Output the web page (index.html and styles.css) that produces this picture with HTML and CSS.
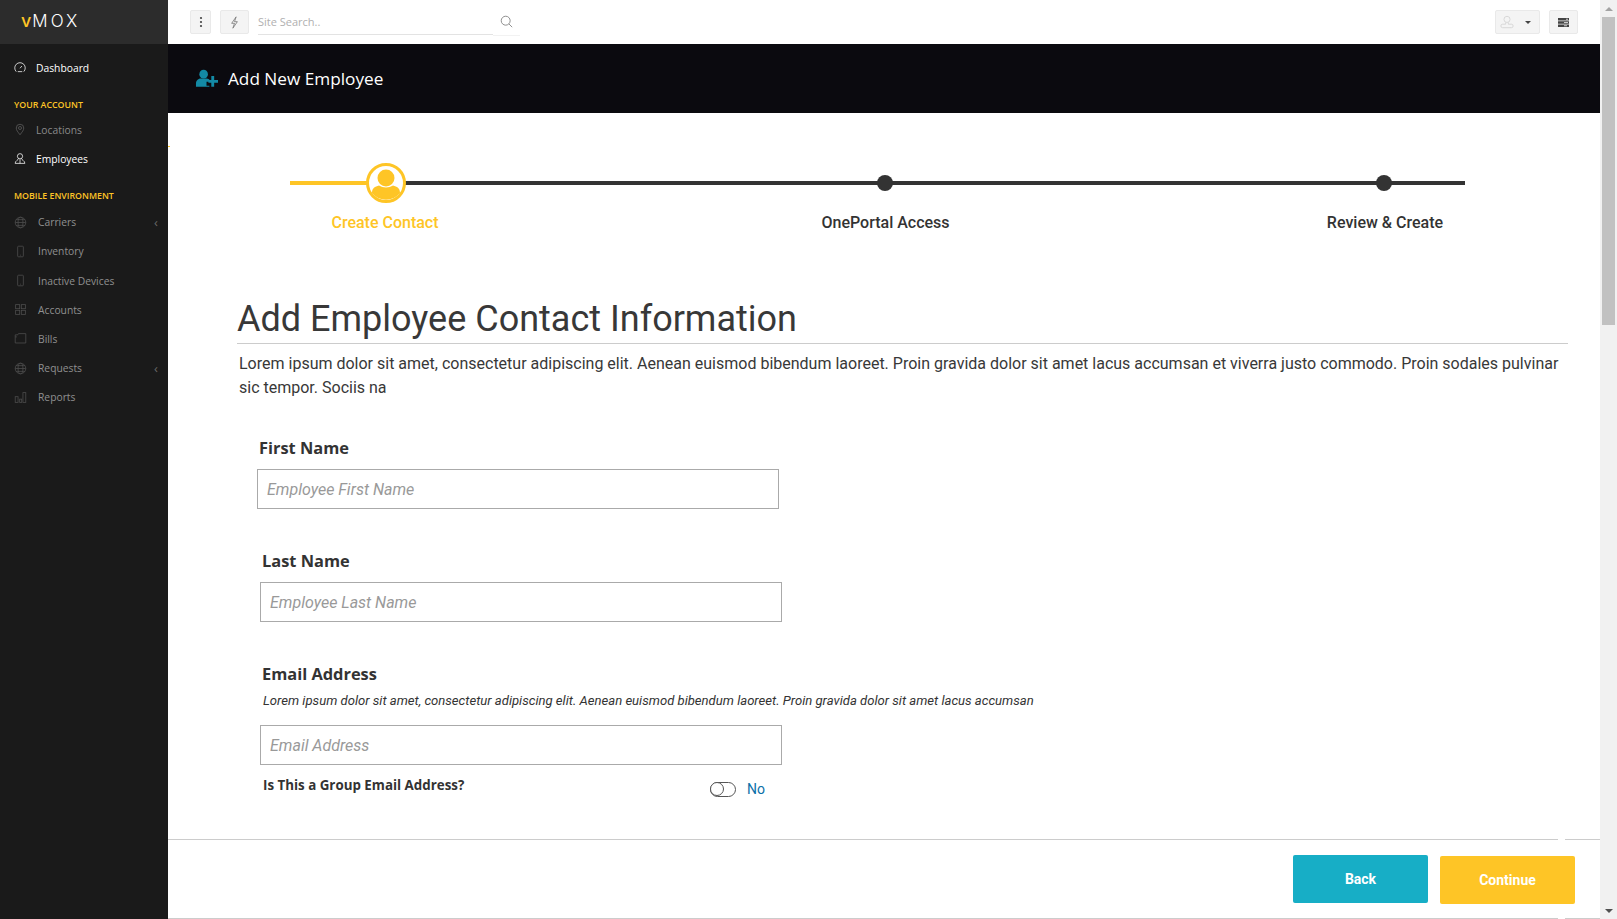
FILE: index.html
```html
<!DOCTYPE html>
<html>

<head>
  <meta charset="utf-8">
  <title>Add New Employee</title>
  <link rel="stylesheet" href="styles.css">
</head>

<body>
  <div class="app">
    <div class="sidebar">
      <div class="logo"><span class="logo-v">v</span>MOX</div>
      <ul class="menu">
        <li class="item item-on first">
          <svg class="ico" viewBox="0 0 16 16"><path d="M3 13.500a7 7 0 1 1 10 0"/><path d="M8 9l2.500-3"/><path d="M5 13.500h6"/></svg>
          Dashboard
        </li>
        <li class="group">YOUR ACCOUNT</li>
        <li class="item">
          <svg class="ico" viewBox="0 0 16 16"><path d="M8 15C5 11 3 9 3 6a5 5 0 0 1 10 0c0 3-2 5-5 9z"/><circle cx="8" cy="6" r="2"/></svg>
          Locations
        </li>
        <li class="item item-on">
          <svg class="ico" viewBox="0 0 16 16"><circle cx="8" cy="5" r="3.500"/><path d="M6 8c0 2-4.500 3-4.500 6.500h13C14.500 11 10 10 10 8"/><path d="M8 9v5.500"/></svg>
          Employees
        </li>
        <li class="group group-2">MOBILE ENVIRONMENT</li>
        <li class="item item-sub">
          <svg class="ico" viewBox="0 0 16 16"><circle cx="8" cy="8" r="6.500"/><ellipse cx="8" cy="8" rx="3" ry="6.500"/><path d="M1.500 8h13M2.500 4.500h11M2.500 11.500h11"/></svg>
          Carriers<span class="caret">&lsaquo;</span>
        </li>
        <li class="item item-sub">
          <svg class="ico" viewBox="0 0 16 16"><rect x="4.500" y="1.500" width="7" height="13" rx="1"/><path d="M7.500 12.500h1"/></svg>
          Inventory
        </li>
        <li class="item item-sub">
          <svg class="ico" viewBox="0 0 16 16"><rect x="4.500" y="1.500" width="7" height="13" rx="1"/><path d="M7.500 12.500h1"/></svg>
          Inactive Devices
        </li>
        <li class="item item-sub">
          <svg class="ico" viewBox="0 0 16 16"><rect x="2" y="2" width="5" height="5"/><rect x="9" y="2" width="5" height="5"/><rect x="2" y="9" width="5" height="5"/><rect x="9" y="9" width="5" height="5"/></svg>
          Accounts
        </li>
        <li class="item item-sub">
          <svg class="ico" viewBox="0 0 16 16"><path d="M1.500 3.500h3l1-1.500h9v11.500h-13z"/><path d="M1.500 6h2"/></svg>
          Bills
        </li>
        <li class="item item-sub">
          <svg class="ico" viewBox="0 0 16 16"><circle cx="8" cy="8" r="6.500"/><ellipse cx="8" cy="8" rx="3" ry="6.500"/><path d="M1.500 8h13M2.500 4.500h11M2.500 11.500h11"/></svg>
          Requests<span class="caret">&lsaquo;</span>
        </li>
        <li class="item item-sub">
          <svg class="ico" viewBox="0 0 16 16"><rect x="1.500" y="7" width="3.500" height="7"/><rect x="7" y="10" width="2.500" height="4"/><rect x="11" y="2" width="3.500" height="12"/></svg>
          Reports
        </li>
      </ul>
      <span class="side-mark"></span>
    </div>

    <div class="main">
      <div class="topbar">
        <span class="tool tool-dots"><svg viewBox="0 0 4 14" width="4" height="14"><circle cx="2" cy="3" r="1.100"/><circle cx="2" cy="7" r="1.100"/><circle cx="2" cy="11" r="1.100"/></svg></span>
        <span class="tool tool-bolt"><svg class="ico-dark" viewBox="0 0 16 16" width="13" height="13"><path d="M10 1L4.500 9H8l-2 6 5.500-8H8z"/></svg></span>
        <div class="search">
          <input class="search-input" type="text" placeholder="Site Search..">
          <span class="search-btn"><svg class="ico-dark" viewBox="0 0 16 16" width="13" height="13"><circle cx="7" cy="7" r="5.500"/><path d="M11 11l4 4"/></svg></span>
        </div>
        <div class="top-right">
          <span class="tool tool-user">
            <svg class="ico-light" viewBox="0 0 16 16" width="14" height="14"><circle cx="8" cy="5" r="3.500"/><path d="M6.500 8.500v2H3a1.500 1.500 0 0 0 0 4h10a1.500 1.500 0 0 0 0-4H9.500v-2"/></svg>
            <span class="tri"></span>
          </span>
          <span class="tool tool-list"><svg viewBox="0 0 11 9" width="11" height="9"><path d="M0 0h11v2.500H0zM0 3.250h11v2.500H0zM0 6.500h11V9H0z" fill="#444"/><path d="M8 .7h2v1H8zM6 4h4v1H6zM6 7.200h3v1H6z" fill="#ccc"/></svg></span>
        </div>
      </div>

      <div class="pagehead">
        <svg class="pagehead-ico" viewBox="0 0 24 18" width="23" height="18"><circle cx="9" cy="5" r="4.500"/><path d="M1 18v-3c0-4 3-5.500 5-5.500h6c1 0 2 .3 3 1V13h-3v4h3v1z"/><path d="M17 7h3v4h4v3h-4v4h-3v-4h-3v-3h3z"/></svg>
        <h1 class="pagehead-title">Add New Employee</h1>
      </div>

      <div class="content">
        <div class="stepper">
          <span class="step-line"></span>
          <span class="step-line-on"></span>
          <div class="step step-on">
            <span class="step-mark">
              <svg class="step-person" viewBox="0 0 40 40" width="40" height="40"><circle cx="20" cy="20" r="18.500" fill="#fff" stroke="#fec526" stroke-width="3"/><circle cx="20" cy="15" r="8.500" fill="#fec526"/><path d="M6 30c0-5 3-6.500 7-7.500 4 2.500 10 2.500 14 0 4 1 7 2.500 7 7.500a18 18 0 0 1-28 0z" fill="#fec526"/></svg>
            </span>
            <span class="step-name">Create Contact</span>
          </div>
          <div class="step">
            <span class="step-mark"><span class="step-dot"></span></span>
            <span class="step-name">OnePortal Access</span>
          </div>
          <div class="step">
            <span class="step-mark"><span class="step-dot"></span></span>
            <span class="step-name">Review &amp; Create</span>
          </div>
        </div>

        <h2 class="title">Add Employee Contact Information</h2>
        <p class="intro">Lorem ipsum dolor sit amet, consectetur adipiscing elit. Aenean euismod bibendum laoreet. Proin gravida dolor sit amet lacus accumsan et viverra justo commodo. Proin sodales pulvinar sic tempor. Sociis na</p>

        <div class="field field-first">
          <label class="field-label">First Name</label>
          <input class="field-input" type="text" placeholder="Employee First Name">
        </div>
        <div class="field">
          <label class="field-label">Last Name</label>
          <input class="field-input" type="text" placeholder="Employee Last Name">
        </div>
        <div class="field">
          <label class="field-label">Email Address</label>
          <p class="field-note">Lorem ipsum dolor sit amet, consectetur adipiscing elit. Aenean euismod bibendum laoreet. Proin gravida dolor sit amet lacus accumsan</p>
          <input class="field-input" type="email" placeholder="Email Address">
          <div class="group-row">
            <span class="group-label">Is This a Group Email Address?</span>
            <span class="switch"><span class="switch-knob"></span></span>
            <span class="switch-text">No</span>
          </div>
        </div>
      </div>

      <div class="footer">
        <button class="btn btn-back">Back</button>
        <button class="btn btn-next">Continue</button>
      </div>
    </div>

    <div class="scrollbar">
      <span class="arrow-up"></span>
      <span class="thumb"></span>
      <span class="arrow-down"></span>
    </div>
  </div>
</body>
</html>
```

FILE: styles.css
```css
html, body
{
   margin:0;
   height:100%;
   overflow:hidden;
   background:#fff;
}
.app
{
   display:flex;
   height:919px;
   font-family:Roboto, sans-serif;
   color:#333;
}

/* sidebar */
.sidebar
{
   position:relative;
   width:168px;
   flex:none;
   background:#1a1a1a;
   font-family:"Open Sans", sans-serif;
}
.logo
{
   height:44px;
   padding-left:21px;
   box-sizing:border-box;
   background:#2c2c2c;
   color:#fff;
   font-family:Inter, sans-serif;
   font-size:17px;
   font-weight:300;
   line-height:42px;
   letter-spacing:3px;
}
.logo-v
{
   color:#fec526;
   font-size:18px;
   font-weight:500;
   letter-spacing:1px;
}
.menu
{
   list-style:none;
   margin:0;
   padding:0;
}
.item
{
   display:flex;
   align-items:center;
   height:29.2px;
   padding-left:14px;
   font-size:10.300px;
   color:#8a8a8a;
   position:relative;
}
.item-on
{
   color:#fff;
}
.first
{
   margin-top:9px;
}
.item-sub
{
   color:#909090;
}
.ico
{
   width:12px;
   height:13px;
   margin-right:10px;
   fill:none;
   stroke:#5f5f5f;
   stroke-width:1;
}
.item-on .ico
{
   stroke:#fff;
}
.item-sub .ico
{
   width:13px;
   margin-right:11px;
   stroke:#4c4c4c;
}
.group
{
   height:14px;
   margin-top:16px;
   margin-bottom:3px;
   padding-left:14px;
   font-size:8.800px;
   font-weight:600;
   line-height:14px;
   color:#fec526;
}
.group-2
{
   margin-top:15px;
   margin-bottom:5px;
}
.caret
{
   position:absolute;
   right:10px;
   top:5px;
   font-size:13px;
   color:#666;
}
.side-mark
{
   position:absolute;
   right:-2px;
   top:146px;
   width:2px;
   height:1px;
   background:#fec526;
}

/* top bar */
.main
{
   flex:1;
   min-width:0;
   display:flex;
   flex-direction:column;
}
.topbar
{
   height:44px;
   flex:none;
   display:flex;
   align-items:flex-start;
   padding:10px 22px 0 22px;
   box-sizing:border-box;
}
.tool
{
   display:flex;
   align-items:center;
   justify-content:center;
   height:24px;
   box-sizing:border-box;
   background:#f4f4f4;
   border:1px solid #e9e9e9;
   border-radius:2px;
}
.tool-dots
{
   width:21px;
   margin-right:9px;
}
.tool-dots svg
{
   fill:#444;
}
.tool-bolt
{
   width:29px;
   margin-right:9px;
}
.ico-dark
{
   fill:none;
   stroke:#777;
   stroke-width:1;
}
.ico-light
{
   fill:none;
   stroke:#d4d4d4;
   stroke-width:1;
}
.search
{
   display:flex;
   width:262px;
}
.search-input
{
   width:235px;
   height:25px;
   box-sizing:border-box;
   border:0;
   border-bottom:1px solid #e3e3e3;
   outline:0;
   padding:0 0 2px 0;
   font-family:"Open Sans", sans-serif;
   font-size:11px;
   color:#aaa;
}
.search-input::placeholder
{
   color:#b0b0b0;
}
.search-btn
{
   width:27px;
   height:26px;
   box-sizing:border-box;
   border-bottom:1px solid #f2f2f2;
   padding:3px 0 0 7px;
}
.top-right
{
   margin-left:auto;
   display:flex;
   gap:9px;
}
.tool-user
{
   width:45px;
   justify-content:flex-start;
   padding-left:4px;
}
.tri
{
   margin-left:11px;
   border:3px solid transparent;
   border-top-color:#444;
   border-bottom:0;
}
.tool-list
{
   width:29px;
}

/* black heading */
.pagehead
{
   height:69px;
   flex:none;
   display:flex;
   align-items:center;
   padding:0 0 1px 27px;
   box-sizing:border-box;
   background:#0b0a0f;
}
.pagehead-ico
{
   fill:#138aa5;
   margin-right:10px;
}
.pagehead-title
{
   margin:0;
   font-family:"Open Sans", sans-serif;
   font-size:17.200px;
   font-weight:500;
   color:#fff;
}

/* content */
.content
{
   flex:1;
   min-height:0;
   padding:50px 32px 0 69px;
}
.stepper
{
   position:relative;
   display:flex;
   justify-content:space-between;
   width:1219px;
   margin-left:38px;
}
.step-line
{
   position:absolute;
   left:15px;
   right:29px;
   top:18px;
   height:4px;
   background:#333;
}
.step-line-on
{
   position:absolute;
   left:15px;
   top:18px;
   width:80px;
   height:4px;
   background:#fec526;
}
.step
{
   position:relative;
   width:220px;
   display:flex;
   flex-direction:column;
   align-items:center;
}
.step-mark
{
   display:flex;
   align-items:center;
   justify-content:center;
   height:40px;
}
.step-on .step-mark
{
   margin-left:2px;
}
.step-dot
{
   width:16px;
   height:16px;
   border-radius:50%;
   background:#333;
}
.step-name
{
   margin-top:10px;
   padding-left:2px;
   font-size:16px;
   font-weight:500;
   line-height:20px;
   color:#333;
}
.step-on .step-name
{
   padding-left:0;
   color:#fec526;
}
.title
{
   margin:64px 0 0 0;
   padding-bottom:2px;
   border-bottom:1px solid #ccc;
   font-size:36px;
   font-weight:400;
   line-height:44px;
   color:#383838;
}
.intro
{
   margin:8px 0 0 2px;
   font-size:16px;
   line-height:24px;
   color:#383838;
}
.field
{
   width:522px;
   margin:40px 0 0 23px;
}
.field-first
{
   margin:36px 0 0 20px;
}
.field-label
{
   display:block;
   padding-left:2px;
   font-family:"Open Sans", sans-serif;
   font-size:16.400px;
   font-weight:700;
   line-height:24px;
   color:#333;
}
.field-input
{
   display:block;
   width:100%;
   height:40px;
   margin-top:9px;
   box-sizing:border-box;
   padding:0 9px;
   border:1px solid #aaa;
   outline:0;
   font-family:Roboto, sans-serif;
   font-size:16px;
}
.field-input::placeholder
{
   color:#999;
   font-style:italic;
}
.field-note
{
   width:900px;
   margin:6px 0 15px 3px;
   font-size:13.100px;
   font-style:italic;
   line-height:18px;
   color:#333;
}
.field-note + .field-input
{
   margin-top:0;
}
.group-row
{
   display:flex;
   align-items:flex-start;
   height:40px;
   margin-top:11px;
   padding-left:3px;
}
.group-label
{
   width:447px;
   font-family:"Open Sans", sans-serif;
   font-size:13.350px;
   font-weight:700;
   line-height:18px;
   color:#333;
}
.switch
{
   position:relative;
   width:26px;
   height:15px;
   margin-top:6px;
   box-sizing:border-box;
   border:1.500px solid #555;
   border-radius:8px;
}
.switch-knob
{
   position:absolute;
   left:-1.500px;
   top:-1.500px;
   width:12px;
   height:12px;
   border:1.500px solid #555;
   border-radius:50%;
   background:#fff;
}
.switch-text
{
   margin-left:11px;
   margin-top:5px;
   font-size:14px;
   color:#0b70a8;
}

/* footer */
.footer
{
   position:relative;
   height:80px;
   flex:none;
   display:flex;
   justify-content:flex-end;
   box-sizing:border-box;
   border-top:1px solid #ccc;
   border-bottom:1px solid #ccc;
   padding:15px 25px 0 0;
   gap:12px;
}
.footer::after
{
   content:"";
   position:absolute;
   right:35px;
   top:-1px;
   bottom:-1px;
   width:7px;
   background:#fff;
}
.btn
{
   position:relative;
   z-index:1;
   width:135px;
   height:48px;
   border:0;
   border-radius:2px;
   font-family:Roboto, sans-serif;
   font-size:14px;
   font-weight:700;
   color:#fff;
}
.btn-back
{
   background:#17aec6;
}
.btn-next
{
   margin-top:1px;
   background:#fec526;
}

/* scrollbar */
.scrollbar
{
   position:relative;
   width:17px;
   flex:none;
   background:#f1f1f1;
}
.thumb
{
   position:absolute;
   left:2px;
   top:17px;
   width:13px;
   height:308px;
   background:#c1c1c1;
}
.arrow-up
{
   position:absolute;
   left:5px;
   top:7px;
   border:4px solid transparent;
   border-bottom-color:#a3a3a3;
   border-top:0;
}
.arrow-down
{
   position:absolute;
   left:5px;
   bottom:6px;
   border:4px solid transparent;
   border-top-color:#505050;
   border-bottom:0;
}
```
